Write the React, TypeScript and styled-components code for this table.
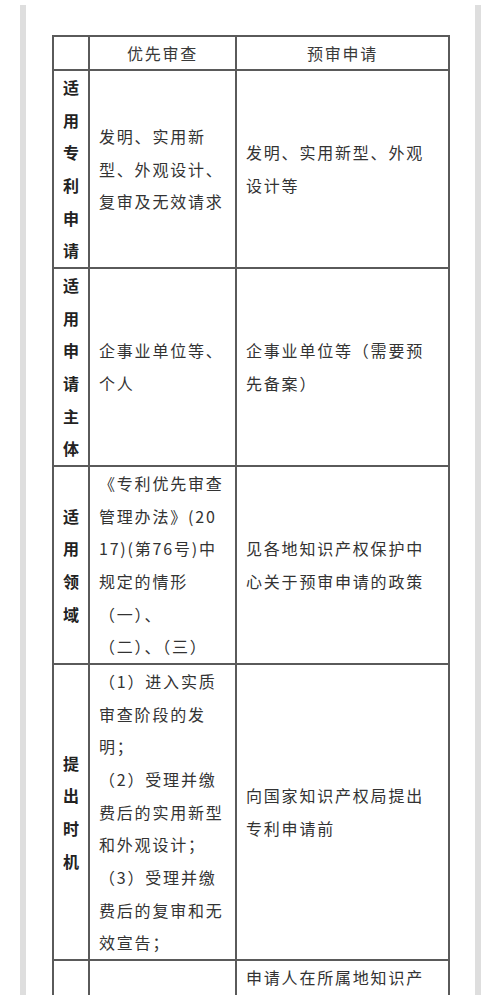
import React from 'react';
import styled, { createGlobalStyle } from 'styled-components';

const GlobalStyle = createGlobalStyle`
  html, body {
    margin: 0;
    padding: 0;
    background: #ffffff;
  }
  body {
    font-family: 'Noto Sans CJK SC', 'Noto Sans', sans-serif;
  }
`;

const Frame = styled.div`
  display: flex;
  align-items: stretch;
  padding: 5px 0 0 20px;
  min-height: 990px;
`;

const Strip = styled.div`
  width: 6px;
  flex-shrink: 0;
  background: #dedede;
`;

const Content = styled.div`
  padding: 30px 0 0 26px;
  margin-right: 25px;
`;

const Table = styled.table`
  border-collapse: collapse;
  table-layout: fixed;
  width: 396px;
  color: #333;
  font-size: 16px;
  letter-spacing: 1.8px;
`;

const Head = styled.th`
  border: 2px solid #5a5a5a;
  padding: 0;
  height: 32px;
  line-height: 32px;
  font-weight: 400;
  color: #3a3a3a;
  text-align: center;
`;

const Label = styled.td`
  border: 2px solid #5a5a5a;
  padding: 0;
  text-align: center;
  vertical-align: middle;
  font-weight: 700;
  color: #222;
  line-height: 32.67px;
  letter-spacing: 0;
`;

const Cell = styled.td<{ $top?: boolean }>`
  border: 2px solid #5a5a5a;
  padding: 0 0 0 9px;
  vertical-align: ${(p) => (p.$top ? 'top' : 'middle')};
  line-height: 32.67px;
  text-align: left;
`;

const BodyRow = styled.tr<{ $minHeight?: number }>`
  height: ${(p) => (p.$minHeight ? `${p.$minHeight}px` : 'auto')};
`;

const Line = styled.div`
  white-space: nowrap;
`;

type Row = { label: string; left: string[]; right: string[]; top?: boolean; minHeight?: number };

const rows: Row[] = [
  {
    label: '适用专利申请',
    left: ['发明、实用新', '型、外观设计、', '复审及无效请求'],
    right: ['发明、实用新型、外观', '设计等'],
  },
  {
    label: '适用申请主体',
    left: ['企事业单位等、', '个人'],
    right: ['企事业单位等（需要预', '先备案）'],
  },
  {
    label: '适用领域',
    left: ['《专利优先审查', '管理办法》(20', '17)(第76号)中', '规定的情形', '（一）、', '（二）、（三）'],
    right: ['见各地知识产权保护中', '心关于预审申请的政策'],
  },
  {
    label: '提出时机',
    left: [
      '（1）进入实质',
      '审查阶段的发',
      '明；',
      '（2）受理并缴',
      '费后的实用新型',
      '和外观设计；',
      '（3）受理并缴',
      '费后的复审和无',
      '效宣告；',
    ],
    right: ['向国家知识产权局提出', '专利申请前'],
  },
  {
    label: '',
    left: [],
    right: ['申请人在所属地知识产'],
    top: true,
    minHeight: 120,
  },
];

export default function App() {
  return (
    <>
      <GlobalStyle />
      <Frame>
        <Strip />
        <Content>
          <Table>
            <colgroup>
              <col style={{ width: 36 }} />
              <col style={{ width: 147 }} />
              <col style={{ width: 213 }} />
            </colgroup>
            <thead>
              <tr>
                <Head />
                <Head>优先审查</Head>
                <Head>预审申请</Head>
              </tr>
            </thead>
            <tbody>
              {rows.map((row, r) => (
                <BodyRow key={r} $minHeight={row.minHeight}>
                  <Label>
                    {row.label.split('').map((ch, i) => (
                      <Line key={i}>{ch}</Line>
                    ))}
                  </Label>
                  <Cell>
                    {row.left.map((t, i) => (
                      <Line key={i}>{t}</Line>
                    ))}
                  </Cell>
                  <Cell $top={row.top}>
                    {row.right.map((t, i) => (
                      <Line key={i}>{t}</Line>
                    ))}
                  </Cell>
                </BodyRow>
              ))}
            </tbody>
          </Table>
        </Content>
        <Strip />
      </Frame>
    </>
  );
}
